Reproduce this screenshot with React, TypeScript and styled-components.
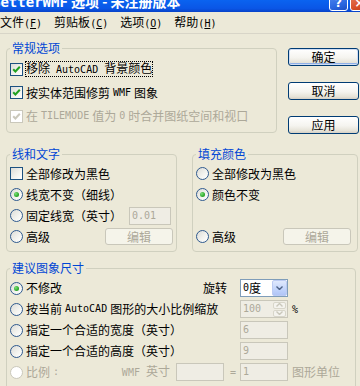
import { createGlobalStyle, styled } from 'styled-components';

const GlobalStyle = createGlobalStyle`
  html,
  body {
    margin: 0;
    padding: 0;
    background: #ece9d8;
  }

  body {
    font-family: 'Noto Sans CJK SC', sans-serif;
    font-size: 12px;
    color: #000;
  }
`;

const Window = styled.div`
  width: 360px;
  height: 386px;
  overflow: hidden;
  background: #ece9d8;
`;

const TitleBar = styled.div`
  display: flex;
  align-items: flex-end;
  height: 12px;
  overflow: hidden;
  background: linear-gradient(180deg, #0a63f0 0%, #0a56e6 70%, #0842c8 100%);
`;

const TitleText = styled.div`
  flex: 1;
  min-width: 0;
  margin-left: -8px;
  font-size: 14px;
  font-weight: 700;
  line-height: 20px;
  color: #fff;
  white-space: nowrap;
`;

const CaptionButton = styled.span<{ $kind: 'help' | 'close' }>`
  box-sizing: border-box;
  display: flex;
  align-items: flex-end;
  justify-content: center;
  flex: none;
  width: 19px;
  height: 21px;
  margin: 0 0 1px 2px;
  padding-bottom: 1px;
  border: 1px solid #fff;
  border-radius: 3px;
  background: ${({ $kind }) =>
    $kind === 'help'
      ? 'linear-gradient(160deg, #5b95f7 0%, #2a66e0 70%, #1d4fc4 100%)'
      : 'linear-gradient(160deg, #e98a6b 0%, #d9512b 70%, #c03c17 100%)'};
  color: #fff;
  font: 700 12px/12px 'DejaVu Sans', sans-serif;

  &:last-child {
    margin-right: -9px;
  }
`;

const MenuBar = styled.nav`
  display: flex;
  align-items: center;
  height: 21px;
  margin-left: -6px;
  border-bottom: 1px solid #d8d5c8;
  line-height: 14px;
`;

const MenuItem = styled.span`
  padding: 0 6px;
  white-space: nowrap;
`;

const Lat = styled.span`
  font-family: 'DejaVu Sans Mono', monospace;
  font-size: 10px;
`;

const Content = styled.div`
  display: flex;
  flex-direction: column;
  padding: 6px 2px 0 6px;
`;

const TopRow = styled.div`
  display: flex;
  align-items: flex-start;
  gap: 11px;
`;

const MiddleRow = styled.div`
  display: flex;
  gap: 15px;
  margin-top: 12px;
`;

const Group = styled.fieldset<{ $width?: number }>`
  box-sizing: border-box;
  flex: none;
  width: ${({ $width }) => ($width ? `${$width}px` : '350px')};
  min-width: 0;
  margin: 0;
  padding: 0 3px;
  border: 1px solid #d0d0bf;
  border-radius: 4px;
`;

const BottomGroup = styled(Group)`
  margin-top: 8px;
  height: 140px;
`;

const Legend = styled.legend`
  padding: 0 2px;
  font-size: 12px;
  line-height: 16px;
  color: #0046d5;
`;

const GeneralList = styled.div`
  display: flex;
  flex-direction: column;
  gap: 9.5px;
  padding: 6px 0 9px;
`;

const ColorList = styled.div`
  display: flex;
  flex-direction: column;
  padding: 1px 0 4px;
`;

const ColorRow = styled.div`
  display: flex;
  align-items: center;
  height: 21px;
`;

const SizeList = styled.div`
  display: flex;
  flex-direction: column;
  gap: 3px;
  padding-top: 3px;
`;

const SizeRow = styled.div`
  display: grid;
  grid-template-columns: 226px 48px 1fr;
  align-items: center;
  column-gap: 4px;
  height: 18px;
`;

const SizeLead = styled.div`
  display: flex;
  align-items: center;
  gap: 6px;
  min-width: 0;
`;

const Option = styled.label<{ $disabled?: boolean }>`
  display: flex;
  align-items: center;
  gap: 3px;
  height: 14px;
  line-height: 14px;
  white-space: nowrap;
  color: ${({ $disabled }) => ($disabled ? '#aca899' : '#000')};
`;

const Focus = styled.span`
  margin-left: -1px;
  padding: 0 1px;
  outline: 1px dotted #000;
  outline-offset: -1px;
`;

const CheckBox = styled.span<{ $disabled?: boolean }>`
  box-sizing: border-box;
  display: flex;
  align-items: center;
  justify-content: center;
  flex: none;
  width: 13px;
  height: 13px;
  border: 1px solid ${({ $disabled }) => ($disabled ? '#cac8bb' : '#1c5180')};
  background: ${({ $disabled }) =>
    $disabled ? '#fff' : 'linear-gradient(135deg, #dcdcd7 0%, #f4f4f0 60%, #fff 100%)'};
`;

const RadioCircle = styled(CheckBox)`
  border-radius: 50%;
  border-color: ${({ $disabled }) => ($disabled ? '#cac8bb' : '#2f5a8f')};
`;

const RadioDot = styled.span`
  width: 5px;
  height: 5px;
  border-radius: 50%;
  background: radial-gradient(circle at 35% 35%, #7ce07a 0%, #2faa2c 60%, #1f8a1c 100%);
`;

const PushColumn = styled.div`
  display: flex;
  flex-direction: column;
  gap: 16px;
  margin-top: 8px;
`;

const PushButton = styled.button<{ $default?: boolean }>`
  box-sizing: border-box;
  width: 71px;
  height: 18px;
  padding: 0;
  border: 1px solid #003c74;
  border-radius: 3px;
  background: linear-gradient(180deg, #fff 0%, #f5f4ef 55%, #e6e3d8 85%, #d6d0c5 100%);
  box-shadow: ${({ $default }) =>
    $default ? 'inset 0 0 0 1px #cfdcf3, inset 0 -2px 0 0 #8fb0e8' : 'none'};
  font: 12px/14px 'Noto Sans CJK SC', sans-serif;
  color: #000;
`;

const EditButton = styled.button`
  box-sizing: border-box;
  flex: none;
  width: 68px;
  height: 17px;
  margin-left: auto;
  padding: 0;
  border: 1px solid #c9c7ba;
  border-radius: 3px;
  background: #f5f4ea;
  font: 12px/14px 'Noto Sans CJK SC', sans-serif;
  color: #aca899;
`;

const TextField = styled.span<{ $width?: number; $disabled?: boolean }>`
  box-sizing: border-box;
  display: flex;
  align-items: center;
  flex: none;
  width: ${({ $width }) => ($width ? `${$width}px` : '48px')};
  height: 18px;
  padding-left: 2px;
  border: 1px solid ${({ $disabled }) => ($disabled ? '#c9c7ba' : '#7f9db9')};
  background: ${({ $disabled }) => ($disabled ? '#efede4' : '#fff')};
  color: ${({ $disabled }) => ($disabled ? '#aca899' : '#000')};
  line-height: 14px;
`;

const LineWidthField = styled(TextField)`
  margin-left: auto;
  margin-right: 2px;
`;

const DropButton = styled.span`
  box-sizing: border-box;
  display: flex;
  align-items: center;
  justify-content: center;
  width: 15px;
  height: 16px;
  margin-left: auto;
  border: 1px solid #bccbf3;
  border-radius: 2px;
  background: linear-gradient(180deg, #e0e9fd 0%, #c1d3fb 60%, #b1c5f6 100%);
`;

const SpinButtons = styled.span`
  display: flex;
  flex-direction: column;
  gap: 1px;
  margin-left: auto;
  margin-right: 1px;
`;

const SpinPart = styled.span`
  box-sizing: border-box;
  display: flex;
  align-items: center;
  justify-content: center;
  width: 13px;
  height: 7px;
  border: 1px solid #d8d6ca;
  border-radius: 2px;
  background: #f4f3ee;
`;

const SideLabel = styled.span<{ $disabled?: boolean }>`
  white-space: nowrap;
  line-height: 14px;
  color: ${({ $disabled }) => ($disabled ? '#aca899' : '#000')};
`;

const RotateLabel = styled(SideLabel)`
  margin-left: auto;
  margin-right: 9px;
`;

const RatioUnit = styled(SideLabel)`
  margin-left: auto;
`;

const Check = ({ disabled }: { disabled?: boolean }) => (
  <CheckBox $disabled={disabled}>
    <svg width="9" height="9" viewBox="0 0 9 9">
      <polyline
        points="1.2,4.2 3.4,6.5 7.8,1.8"
        fill="none"
        stroke={disabled ? '#cac8bb' : '#21a121'}
        strokeWidth="2"
      />
    </svg>
  </CheckBox>
);

const Radio = ({ checked, disabled }: { checked?: boolean; disabled?: boolean }) => (
  <RadioCircle $disabled={disabled}>{checked && <RadioDot />}</RadioCircle>
);

const Chevron = ({ up, color }: { up?: boolean; color: string }) => (
  <svg width="7" height="4" viewBox="0 0 7 4">
    <polyline
      points={up ? '0.5,3.5 3.5,0.5 6.5,3.5' : '0.5,0.5 3.5,3.5 6.5,0.5'}
      fill="none"
      stroke={color}
      strokeWidth="1.4"
    />
  </svg>
);

const App = () => (
  <Window>
    <GlobalStyle />
    <TitleBar>
      <TitleText>
        <Lat style={{ fontSize: 14 }}>BetterWMF</Lat> 选项 - 未注册版本
      </TitleText>
      <CaptionButton $kind="help">?</CaptionButton>
      <CaptionButton $kind="close">×</CaptionButton>
    </TitleBar>

    <MenuBar>
      <MenuItem>
        文件<Lat>(<u>F</u>)</Lat>
      </MenuItem>
      <MenuItem>
        剪贴板<Lat>(<u>C</u>)</Lat>
      </MenuItem>
      <MenuItem>
        选项<Lat>(<u>O</u>)</Lat>
      </MenuItem>
      <MenuItem>
        帮助<Lat>(<u>H</u>)</Lat>
      </MenuItem>
    </MenuBar>

    <Content>
      <TopRow>
        <Group $width={271}>
          <Legend>常规选项</Legend>
          <GeneralList>
            <Option>
              <Check />
              <Focus>
                移除<Lat> AutoCAD </Lat>背景颜色
              </Focus>
            </Option>
            <Option>
              <Check />
              按实体范围修剪<Lat> WMF </Lat>图象
            </Option>
            <Option $disabled>
              <Check disabled />在<Lat> TILEMODE </Lat>值为<Lat> 0 </Lat>时合并图纸空间和视口
            </Option>
          </GeneralList>
        </Group>
        <PushColumn>
          <PushButton $default>确定</PushButton>
          <PushButton>取消</PushButton>
          <PushButton>应用</PushButton>
        </PushColumn>
      </TopRow>

      <MiddleRow>
        <Group $width={171}>
          <Legend>线和文字</Legend>
          <ColorList>
            <ColorRow>
              <Option>
                <CheckBox />
                全部修改为黑色
              </Option>
            </ColorRow>
            <ColorRow>
              <Option>
                <Radio checked />
                线宽不变（细线）
              </Option>
            </ColorRow>
            <ColorRow>
              <Option>
                <Radio />
                固定线宽（英寸）
              </Option>
              <LineWidthField $width={42} $disabled>
                <Lat>0.01</Lat>
              </LineWidthField>
            </ColorRow>
            <ColorRow>
              <Option>
                <Radio />
                高级
              </Option>
              <EditButton disabled>编辑</EditButton>
            </ColorRow>
          </ColorList>
        </Group>
        <Group $width={166}>
          <Legend>填充颜色</Legend>
          <ColorList>
            <ColorRow>
              <Option>
                <Radio />
                全部修改为黑色
              </Option>
            </ColorRow>
            <ColorRow>
              <Option>
                <Radio checked />
                颜色不变
              </Option>
            </ColorRow>
            <ColorRow />
            <ColorRow>
              <Option>
                <Radio />
                高级
              </Option>
              <EditButton disabled style={{ marginRight: 3 }}>
                编辑
              </EditButton>
            </ColorRow>
          </ColorList>
        </Group>
      </MiddleRow>

      <BottomGroup>
        <Legend>建议图象尺寸</Legend>
        <SizeList>
          <SizeRow>
            <SizeLead>
              <Option>
                <Radio checked />
                不修改
              </Option>
              <RotateLabel>旋转</RotateLabel>
            </SizeLead>
            <TextField>
              <Lat>0</Lat>度
              <DropButton>
                <Chevron color="#4d6185" />
              </DropButton>
            </TextField>
            <span />
          </SizeRow>
          <SizeRow>
            <SizeLead>
              <Option>
                <Radio />
                按当前<Lat> AutoCAD </Lat>图形的大小比例缩放
              </Option>
            </SizeLead>
            <TextField $disabled>
              <Lat>100</Lat>
              <SpinButtons>
                <SpinPart>
                  <Chevron up color="#c9c7ba" />
                </SpinPart>
                <SpinPart>
                  <Chevron color="#c9c7ba" />
                </SpinPart>
              </SpinButtons>
            </TextField>
            <SideLabel>
              <Lat>%</Lat>
            </SideLabel>
          </SizeRow>
          <SizeRow>
            <SizeLead>
              <Option>
                <Radio />
                指定一个合适的宽度（英寸）
              </Option>
            </SizeLead>
            <TextField $disabled>
              <Lat>6</Lat>
            </TextField>
            <span />
          </SizeRow>
          <SizeRow>
            <SizeLead>
              <Option>
                <Radio />
                指定一个合适的高度（英寸）
              </Option>
            </SizeLead>
            <TextField $disabled>
              <Lat>9</Lat>
            </TextField>
            <span />
          </SizeRow>
          <SizeRow>
            <SizeLead>
              <Option $disabled>
                <Radio disabled />
                比例<Lat>:</Lat>
              </Option>
              <RatioUnit $disabled>
                <Lat>WMF </Lat>英寸
              </RatioUnit>
              <TextField $disabled />
              <SideLabel $disabled>
                <Lat>=</Lat>
              </SideLabel>
            </SizeLead>
            <TextField $disabled>
              <Lat>1</Lat>
            </TextField>
            <SideLabel $disabled>图形单位</SideLabel>
          </SizeRow>
        </SizeList>
      </BottomGroup>
    </Content>
  </Window>
);

export default App;
